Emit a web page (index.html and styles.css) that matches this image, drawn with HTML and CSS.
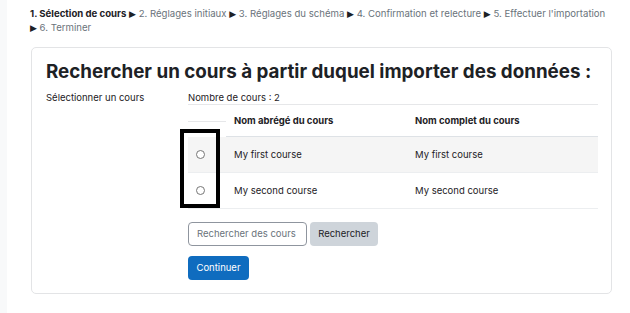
FILE: index.html
```html
<!DOCTYPE html>
<html lang="fr">
<head>
<meta charset="utf-8">
<link rel="stylesheet" href="styles.css">
</head>
<body>
<div class="page">
  <div class="strip"></div>
  <main class="main">
    <nav class="crumbs"><b>1. Sélection de cours</b> <span class="sep">▶</span> 2. Réglages initiaux <span class="sep">▶</span> 3. Réglages du schéma <span class="sep">▶</span> 4. Confirmation et relecture <span class="sep">▶</span> 5. Effectuer l'importation<br><span class="sep">▶</span> 6. Terminer</nav>
    <section class="card">
      <h2 class="title">Rechercher un cours à partir duquel importer des données :</h2>
      <div class="form-row">
        <div class="label">Sélectionner un cours</div>
        <div class="field">
          <div class="count">Nombre de cours : 2</div>
          <div class="table">
            <div class="thead">
              <div class="c0 hc0"></div>
              <div class="c1 th">Nom abrégé du cours</div>
              <div class="c2 th">Nom complet du cours</div>
            </div>
            <div class="tr odd">
              <div class="c0"><span class="radio"></span></div>
              <div class="c1">My first course</div>
              <div class="c2">My first course</div>
            </div>
            <div class="tr">
              <div class="c0"><span class="radio"></span></div>
              <div class="c1">My second course</div>
              <div class="c2">My second course</div>
            </div>
            <div class="focus-box"></div>
          </div>
          <div class="search">
            <span class="input">Rechercher des cours</span>
            <span class="btn btn-secondary">Rechercher</span>
          </div>
          <span class="btn btn-primary">Continuer</span>
        </div>
      </div>
    </section>
  </main>
</div>
</body>
</html>
```
FILE: styles.css
```css
* { box-sizing: border-box; }
html, body { margin: 0; padding: 0; background: #fff; }
body {
  font-family: Inter, Roboto, "Liberation Sans", Arial, sans-serif;
  color: #1d2125;
  font-size: 9.5px;
}
.page { display: flex; min-height: 313px; }
.strip { width: 7px; background: #f8f9fa; flex: none; }
.main { flex: 1; padding: 7px 10px 0 23px; }
.crumbs { line-height: 14px; height: 28px; color: #6a737b; white-space: nowrap; font-size: 9.6px; }
.crumbs b { color: #1d2125; font-weight: 700; }
.sep { color: #1d2125; font-family: "DejaVu Sans", sans-serif; font-size: 9px; line-height: 1; }
.card {
  margin-top: 12px;
  margin-left: 1px;
  width: 581px;
  height: 247px;
  border: 1px solid #e3e4e6;
  border-radius: 5px;
  padding: 12px 13px 0 14px;
}
.title {
  margin: 0;
  font-size: 18.8px;
  line-height: 24px;
  font-weight: 700;
  white-space: nowrap;
}
.form-row { display: flex; margin-top: 7px; }
.label { width: 142px; line-height: 14px; }
.field { width: 410px; }
.count { line-height: 13px; border-bottom: 1px solid #e6e7e9; }
.table { position: relative; }
.thead, .tr { display: grid; grid-template-columns: 38px 181px 191px; }
.thead { height: 32px; align-items: center; }
.thead .c1, .thead .c2 { height: 32px; line-height: 32px; border-bottom: 1px solid #dee2e6; font-weight: 700; padding-left: 8px; }
.hc0 { height: 1px; background: #e6e7e9; align-self: center; }
.tr { height: 36px; align-items: center; border-bottom: 1px solid #eceef0; }
.tr:last-of-type { border-bottom: none; }
.tr.odd { background: #f5f5f5; }
.tr .c1, .tr .c2 { padding-left: 8px; }
.tr .c0 { display: flex; padding-left: 8px; }
.radio {
  width: 9px; height: 9px; border-radius: 50%;
  border: 1px solid #767676; background: #fff;
}
.focus-box {
  position: absolute;
  left: -8px; top: 24px;
  width: 40px; height: 79px;
  border: 4px solid #000;
}
.search { display: flex; gap: 3px; margin-top: 13px; }
.input {
  width: 119px; height: 24px;
  border: 1px solid #8f959e; border-radius: 4px;
  line-height: 22px; padding-left: 8px; color: #6a737b;
  font-size: 9.5px;
}
.btn {
  display: inline-block; height: 24px; line-height: 24px;
  border-radius: 4px; padding: 0 8px; font-size: 9.5px;
}
.btn-secondary { background: #ced4da; color: #1d2125; width: 68px; text-align: center; padding: 0; }
.btn-primary { background: #0f6cbf; color: #fff; margin-top: 10px; width: 61px; text-align: center; padding: 0; }
```
